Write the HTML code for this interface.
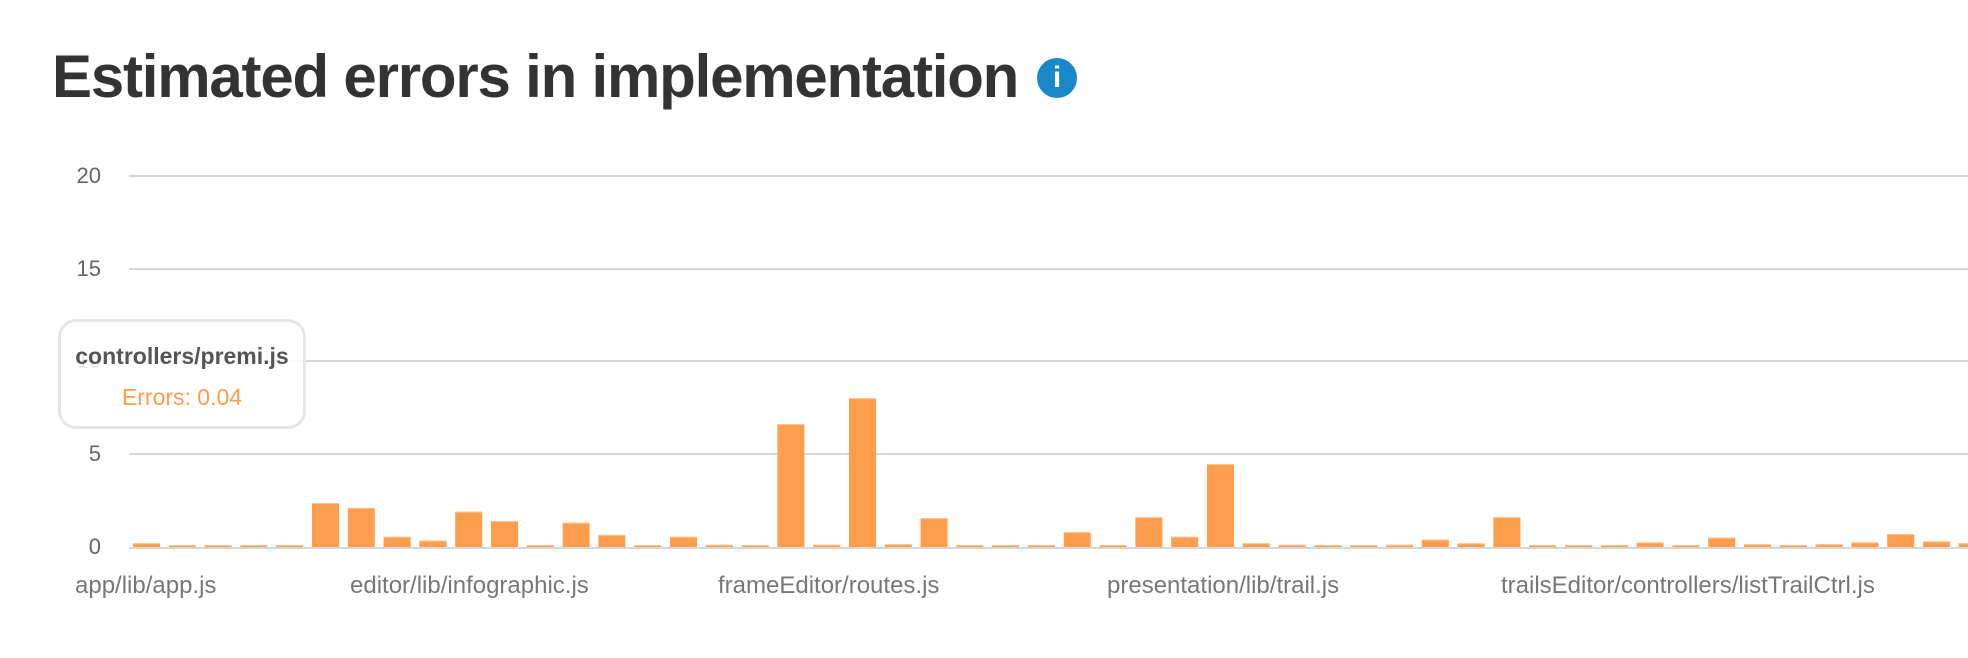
<!DOCTYPE html>
<html><head><meta charset="utf-8"><style>
body{margin:0;width:1968px;height:658px;background:#fff;position:relative;overflow:hidden;font-family:"Liberation Sans",Arial,sans-serif}
.t{position:absolute;left:52px;top:42px;font-size:60px;font-weight:bold;color:#333;white-space:nowrap;letter-spacing:-1.2px}
.info{position:absolute;left:1037px;top:58px;width:40px;height:40px;border-radius:50%;background:#1a87c9;color:#fff;font:bold 30px "Liberation Sans",sans-serif;text-align:center;line-height:40px}
.yl{position:absolute;right:1867px;font-size:22px;color:#666;line-height:24px}
.xl{position:absolute;top:572px;font-size:24px;color:#777;white-space:nowrap}
.tip{position:absolute;left:58px;top:319px;width:242px;height:104px;border:3px solid #e6e6e6;border-radius:18px;background:rgba(255,255,255,0.85);text-align:center}
</style></head><body>
<div class="t">Estimated errors in implementation</div>
<div class="info">i</div>
<div class="yl" style="top:164px">20</div>
<div class="yl" style="top:257px">15</div>
<div class="yl" style="top:349px">10</div>
<div class="yl" style="top:442px">5</div>
<div class="yl" style="top:535px">0</div>
<svg style="position:absolute;left:0;top:0" width="1968" height="658" id="s">
<g stroke="#d6d6d6" stroke-width="2">
<line x1="129" y1="176" x2="1968" y2="176"/><line x1="129" y1="269" x2="1968" y2="269"/>
<line x1="129" y1="361" x2="1968" y2="361"/><line x1="129" y1="454" x2="1968" y2="454"/>
<line x1="129" y1="548" x2="1968" y2="548"/></g>
<g id="b" fill="#fe9d4c"></g>
</svg>
<script>
var v=[0.2,0.05,0.1,0.03,0.05,2.36,2.1,0.55,0.35,1.9,1.4,0.1,1.3,0.65,0.08,0.55,0.12,0.06,6.6,0.12,8.0,0.15,1.55,0.03,0.03,0.04,0.8,0.07,1.6,0.55,4.45,0.2,0.12,0.04,0.03,0.12,0.4,0.2,1.6,0.02,0.1,0.02,0.25,0.1,0.5,0.15,0.08,0.15,0.25,0.7,0.3,0.2];
var g=document.getElementById('b'),h='';
for(var i=0;i<v.length;i++){var x=133+i*35.8,hh=Math.max(2,v[i]*18.6);h+='<rect x="'+x.toFixed(1)+'" y="'+(547-hh).toFixed(1)+'" width="27" height="'+hh.toFixed(1)+'"/><rect x="'+x.toFixed(1)+'" y="'+(547-hh).toFixed(1)+'" width="27" height="1" fill="#ffc28f"/>';}
g.innerHTML=h;
</script>
<div class="xl" style="left:75px">app/lib/app.js</div>
<div class="xl" style="left:350px">editor/lib/infographic.js</div>
<div class="xl" style="left:718px">frameEditor/routes.js</div>
<div class="xl" style="left:1107px">presentation/lib/trail.js</div>
<div class="xl" style="left:1501px">trailsEditor/controllers/listTrailCtrl.js</div>
<div class="tip">
<div style="margin-top:21px;font-weight:bold;font-size:23px;color:#555">controllers/premi.js</div>
<div style="margin-top:14px;font-size:23px;color:#fe9d4c">Errors: 0.04</div>
</div>
</body></html>
